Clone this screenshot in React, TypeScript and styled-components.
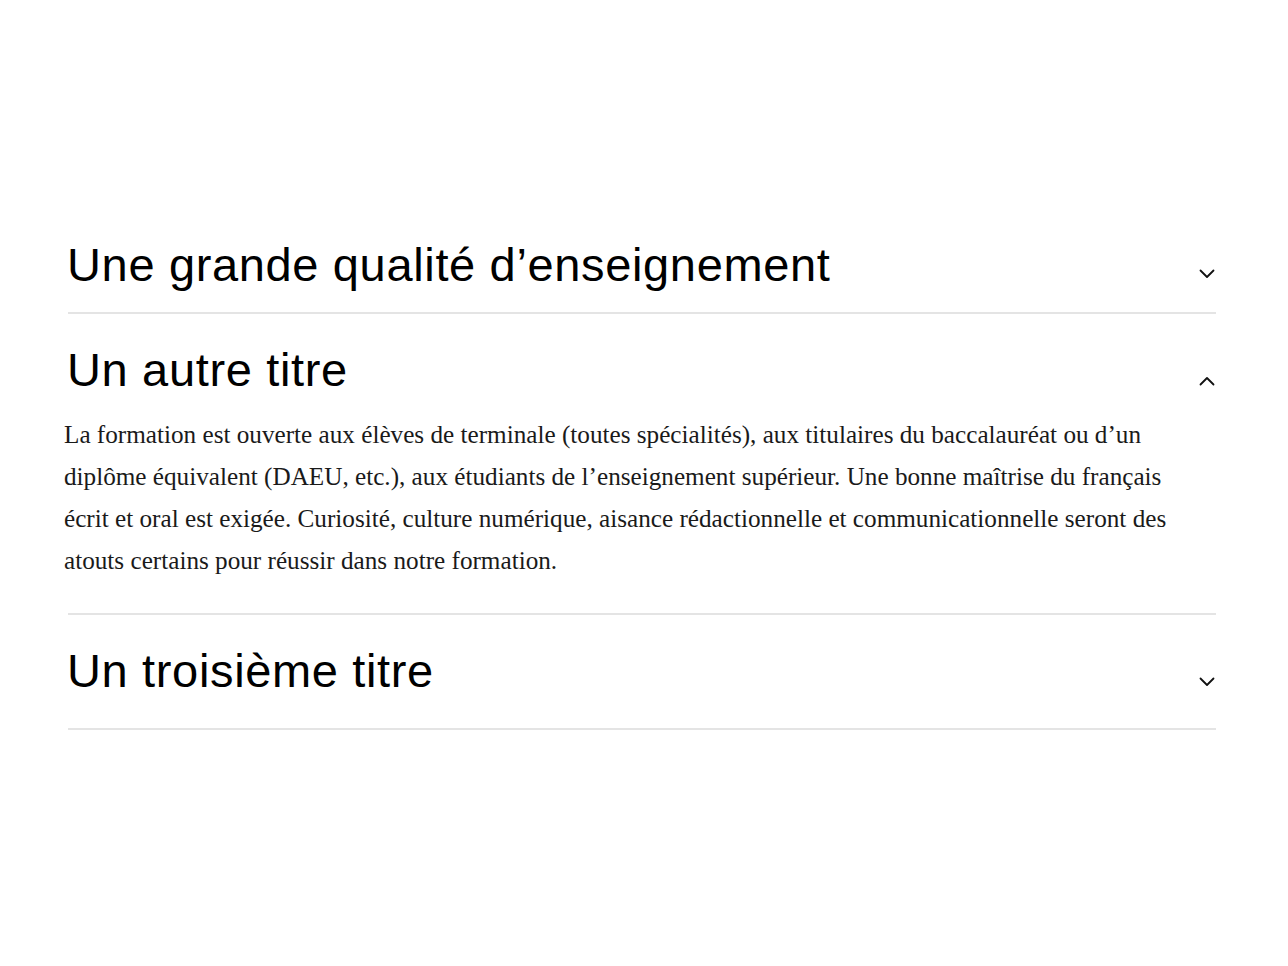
import React, { useState } from "react";
import styled, { createGlobalStyle } from "styled-components";

const GlobalStyle = createGlobalStyle`
  html, body { margin: 0; padding: 0; background: #ffffff; }
  body { font-family: "Liberation Sans", Arial, sans-serif; color: #000; }
`;

const Page = styled.main`
  padding: 209px 72px 0 68px;
`;

const Accordion = styled.div`
  display: flex;
  flex-direction: column;
`;

const Item = styled.section<{ $bottom: number }>`
  border-bottom: 2px solid #e4e4e4;
  padding-bottom: ${(p) => p.$bottom}px;
`;

const Header = styled.button<{ $open: boolean }>`
  all: unset;
  box-sizing: border-box;
  width: 100%;
  display: flex;
  align-items: center;
  justify-content: space-between;
  padding-top: 28px;
  cursor: pointer;
`;

const Title = styled.h2`
  margin: 0 0 0 -1px;
  font-family: "Liberation Sans", Arial, sans-serif;
  font-weight: 400;
  font-size: 47px;
  line-height: 55px;
  color: #000;
  letter-spacing: 0.65px;
`;

const Chevron = styled.svg<{ $shift: number }>`
  width: 16px;
  height: 10px;
  margin-right: 1px;
  margin-top: ${(p) => p.$shift}px;
  flex: none;
`;

const Panel = styled.div`
  margin: 0 16px 0 -4px;
  padding-top: 17px;
  padding-bottom: 1px;
  font-family: "Liberation Serif", "Times New Roman", serif;
  font-size: 25.2px;
  line-height: 42px;
  color: #1a1a1a;
`;

const items = [
  {
    title: "Une grande qualité d’enseignement",
    body: "",
    bottom: 20,
    shift: 18,
  },
  {
    title: "Un autre titre",
    body:
      "La formation est ouverte aux élèves de terminale (toutes spécialités), aux titulaires du baccalauréat ou d’un diplôme équivalent (DAEU, etc.), aux étudiants de l’enseignement supérieur. Une bonne maîtrise du français écrit et oral est exigée. Curiosité, culture numérique, aisance rédactionnelle et communicationnelle seront des atouts certains pour réussir dans notre formation.",
    bottom: 30,
    shift: 22,
  },
  {
    title: "Un troisième titre",
    body: "",
    bottom: 30,
    shift: 22,
  },
];

export default function App() {
  const [open, setOpen] = useState(1);
  return (
    <>
      <GlobalStyle />
      <Page>
        <Accordion>
          {items.map((it, i) => {
            const isOpen = open === i;
            return (
              <Item key={i} $bottom={isOpen ? 30 : it.bottom}>
                <Header $open={isOpen} onClick={() => setOpen(isOpen ? -1 : i)}>
                  <Title>{it.title}</Title>
                  <Chevron $shift={it.shift} viewBox="0 0 16 10" fill="none" stroke="#111" strokeWidth="1.8" strokeLinecap="round" strokeLinejoin="round">
                    {isOpen ? <polyline points="1.5,8.5 8,2 14.5,8.5" /> : <polyline points="1.5,1.5 8,8 14.5,1.5" />}
                  </Chevron>
                </Header>
                {isOpen && it.body && <Panel>{it.body}</Panel>}
              </Item>
            );
          })}
        </Accordion>
      </Page>
    </>
  );
}
